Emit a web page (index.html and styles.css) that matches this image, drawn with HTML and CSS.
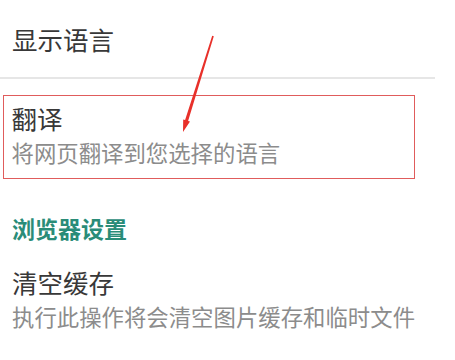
FILE: index.html
```html
<!DOCTYPE html>
<html lang="zh-CN">
<head>
<meta charset="utf-8">
<link rel="stylesheet" href="styles.css">
</head>
<body>
<div class="page">
  <div class="list">
    <div class="item first">
      <div class="title">显示语言</div>
    </div>
    <div class="divider"></div>
    <div class="item boxed">
      <div class="title">翻译</div>
      <div class="sub">将网页翻译到您选择的语言</div>
    </div>
    <div class="category">浏览器设置</div>
    <div class="item last">
      <div class="title">清空缓存</div>
      <div class="sub">执行此操作将会清空图片缓存和临时文件</div>
    </div>
  </div>
  <svg class="arrow" width="455" height="360" viewBox="0 0 455 360">
    <polygon points="212.2,35.7 185.1,120.1 183.2,119.5 183,132 190,121.6 188.1,121 213.8,36.3" fill="#e8302a"/>
  </svg>
</div>
</body>
</html>
```
FILE: styles.css
```css
html, body {
  margin: 0;
  padding: 0;
  background: #ffffff;
}
.page {
  position: relative;
  width: 455px;
  height: 360px;
  overflow: hidden;
  font-family: "Noto Sans CJK SC", "Noto Sans", sans-serif;
}
.list {
  width: 435px;
  padding-top: 23px;
  display: flex;
  flex-direction: column;
}
.item {
  padding-left: 12px;
}
.title {
  font-size: 25.5px;
  line-height: 32px;
  color: #383838;
}
.sub {
  font-size: 22.4px;
  line-height: 28px;
  color: #8c8c8c;
  margin-top: 4px;
}
.first {
  padding-bottom: 22px;
}
.divider {
  height: 1.5px;
  background: #e6e6e6;
}
.boxed {
  margin: 16px 0 0 3px;
  width: 412px;
  box-sizing: border-box;
  border: 1.5px solid #e05c5c;
  padding: 6.5px 0 12px 7.5px;
}
.category {
  margin-top: 34px;
  padding-left: 12px;
  font-size: 23px;
  line-height: 30px;
  font-weight: 700;
  color: #2a8c78;
}
.last {
  margin-top: 23px;
}
.arrow {
  position: absolute;
  left: 0;
  top: 0;
  pointer-events: none;
}
```
